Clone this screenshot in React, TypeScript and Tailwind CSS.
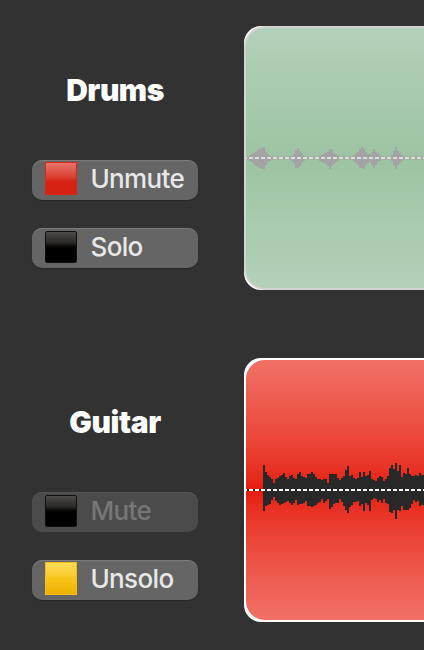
type Tone = 'red' | 'black' | 'yellow';

const GUITAR_TOPS = [
  45, 65, 74, 82, 87, 98, 88, 85, 79, 75, 68, 80, 87, 79, 75, 85, 87, 71, 67, 78, 80, 85, 71, 71, 66, 71, 80, 86, 86, 90, 87, 88, 98, 72,
  73, 72, 73, 83, 90, 85, 78, 60, 47, 79, 75, 84, 88, 85, 65, 80, 65, 79, 76, 64, 88, 90, 92, 85, 78, 80, 92, 87, 79, 55, 44, 57, 39, 64,
  45, 80, 68, 71, 54, 71, 79, 79, 76, 79, 69, 74, 74,
];
const GUITAR_BOTTOMS = [
  182, 168, 166, 162, 150, 141, 153, 158, 165, 161, 160, 156, 153, 159, 166, 158, 149, 166, 163, 163, 158, 153, 169, 169, 170, 167, 166, 160, 155, 147, 160, 153, 147, 177,
  172, 163, 160, 160, 147, 157, 168, 181, 189, 171, 165, 155, 155, 153, 169, 163, 184, 160, 165, 182, 150, 145, 147, 155, 151, 159, 148, 158, 163, 185, 188, 181, 207, 181,
  182, 167, 179, 180, 180, 174, 161, 151, 155, 153, 168, 166, 165,
];

const guitarPath = GUITAR_TOPS.map((top, i) => {
  const x = 17 + i * 2;
  const y = (top - 120) / 3 + 130;
  const h = (GUITAR_BOTTOMS[i] - top) / 3;
  return `M${x} ${y.toFixed(2)}h2v${h.toFixed(2)}h-2z`;
}).join('');

// Each drum hit: starting x, then the reach above and below the centre line for every 2px column.
const HITS: { x: number; up: number[]; down: number[] }[] = [
  { x: 3, up: [2.5, 4, 5, 6.5, 8, 9, 10, 11, 6, 4, 2.5], down: [3, 4, 6, 7.5, 9, 10, 11, 10.5, 6.5, 4, 3] },
  { x: 45, up: [2.5, 4, 8.5, 10, 7.5, 5, 2.5], down: [2.5, 5, 9.5, 10, 8, 5, 3] },
  { x: 73, up: [2.5, 3.5, 4.5, 5.5, 6, 9, 8, 5.5, 4, 2.5], down: [2.5, 3.5, 4.5, 6, 8, 10.5, 8, 6, 4, 2.5] },
  { x: 107, up: [3, 5, 6.5, 9.5, 11.5, 9.5, 6, 4, 4, 6, 9, 6, 5, 2.5], down: [2.5, 4.5, 7, 9.5, 10, 10.5, 7, 5, 4, 7, 9.5, 6.5, 4, 2.5] },
  { x: 145, up: [3, 7.5, 11, 7.5, 5, 3], down: [3, 7, 10.5, 7, 4.5, 3] },
];
const drumsPath = HITS.map((hit) =>
  hit.up.map((u, i) => `M${hit.x + i * 2} ${130 - u}h2v${u + hit.down[i]}h-2z`).join(''),
).join('');

const SQUARES: Record<Tone, string> = {
  red: 'mt-[2px] h-[33px] border-[1.5px] border-[#d62818] bg-linear-to-b from-[#e6746a] via-[#dd4538] via-40% to-[#d62212] to-60%',
  black: 'mt-[3px] h-[32px] rounded-[2px] border border-[#0f0f0e] bg-linear-to-b from-[#4d4c4a] via-[#2b2a28] via-35% to-black to-60%',
  yellow: 'mt-[2px] h-[33px] border border-[#f5bd14] bg-linear-to-b from-[#ffdc58] via-[#f9c51b] via-50% to-[#edb000]',
};

function TrackButton({ tone, label, disabled = false }: { tone: Tone; label: string; disabled?: boolean }) {
  return (
    <button
      disabled={disabled}
      className={`flex h-10 w-[166px] items-start rounded-[10px] pl-[13px] text-left ${
        disabled
          ? 'bg-[#4b4b4b] text-[#777777] shadow-[inset_0_1px_0_#565656]'
          : 'bg-[#656565] text-[#e8e8e8] shadow-[inset_0_1px_0_#7c7c7c,0_1px_1px_#262626]'
      }`}
    >
      <span className={`w-8 shrink-0 ${SQUARES[tone]}`} />
      <span className="ml-[13.5px] mt-[3px] whitespace-nowrap text-[26px] font-[450] leading-8 tracking-[-0.65px]">{label}</span>
    </button>
  );
}

function Drums() {
  return (
    <div className="h-[264px] w-[220px] shrink-0 rounded-[17px] bg-white">
      <div className="h-full w-full overflow-hidden rounded-[21px] border-2 border-[#d3d3d3] bg-linear-to-b from-[#b3d1b9] via-[#9dc3a4] to-[#b3d1b9]">
        <svg width="220" height="260" viewBox="0 0 220 260" shapeRendering="crispEdges">
          <path d={drumsPath} fill="#a3a3a3" />
          <rect x="0" y="129" width="220" height="2" fill="#a3a3a3" />
          <rect x="0" y="128" width="220" height="4" fill="#a3a3a3" opacity="0.4" />
          <path d="M-3 130H220" stroke="#dedede" strokeWidth="2" strokeDasharray="4 2" />
        </svg>
      </div>
    </div>
  );
}

function Guitar() {
  return (
    <div className="h-[264px] w-[220px] shrink-0 rounded-[17px] bg-white">
      <div className="h-full w-full overflow-hidden rounded-[21px] border-2 border-white bg-linear-to-b from-[#f17066] via-[#e61b0d] to-[#f17066]">
        <svg width="220" height="260" viewBox="0 0 220 260">
          <path d={guitarPath} fill="#282828" shapeRendering="crispEdges" />
          <rect x="0" y="129" width="18" height="2" fill="#282828" />
          <path d="M-3 130H220" stroke="white" strokeWidth="2" strokeDasharray="4 2" />
        </svg>
      </div>
    </div>
  );
}

export default function App() {
  return (
    <main className="flex h-[650px] w-[424px] flex-col gap-[68px] overflow-hidden bg-[#323232] pt-[26px] font-['Inter',sans-serif]">
      <section className="flex h-[264px] shrink-0">
        <div className="ml-8 mr-[46px] flex w-[166px] flex-col items-center">
          <h2 className="mt-11 h-10 text-[30px] font-black leading-10 tracking-[-0.5px] text-white">Drums</h2>
          <div className="mt-[50px] flex flex-col gap-7">
            <TrackButton tone="red" label="Unmute" />
            <TrackButton tone="black" label="Solo" />
          </div>
        </div>
        <Drums />
      </section>
      <section className="flex h-[264px] shrink-0">
        <div className="ml-8 mr-[46px] flex w-[166px] flex-col items-center">
          <h2 className="mt-11 h-10 text-[30px] font-black leading-10 tracking-[-0.4px] text-white">Guitar</h2>
          <div className="mt-[50px] flex flex-col gap-7">
            <TrackButton tone="black" label="Mute" disabled />
            <TrackButton tone="yellow" label="Unsolo" />
          </div>
        </div>
        <Guitar />
      </section>
    </main>
  );
}
